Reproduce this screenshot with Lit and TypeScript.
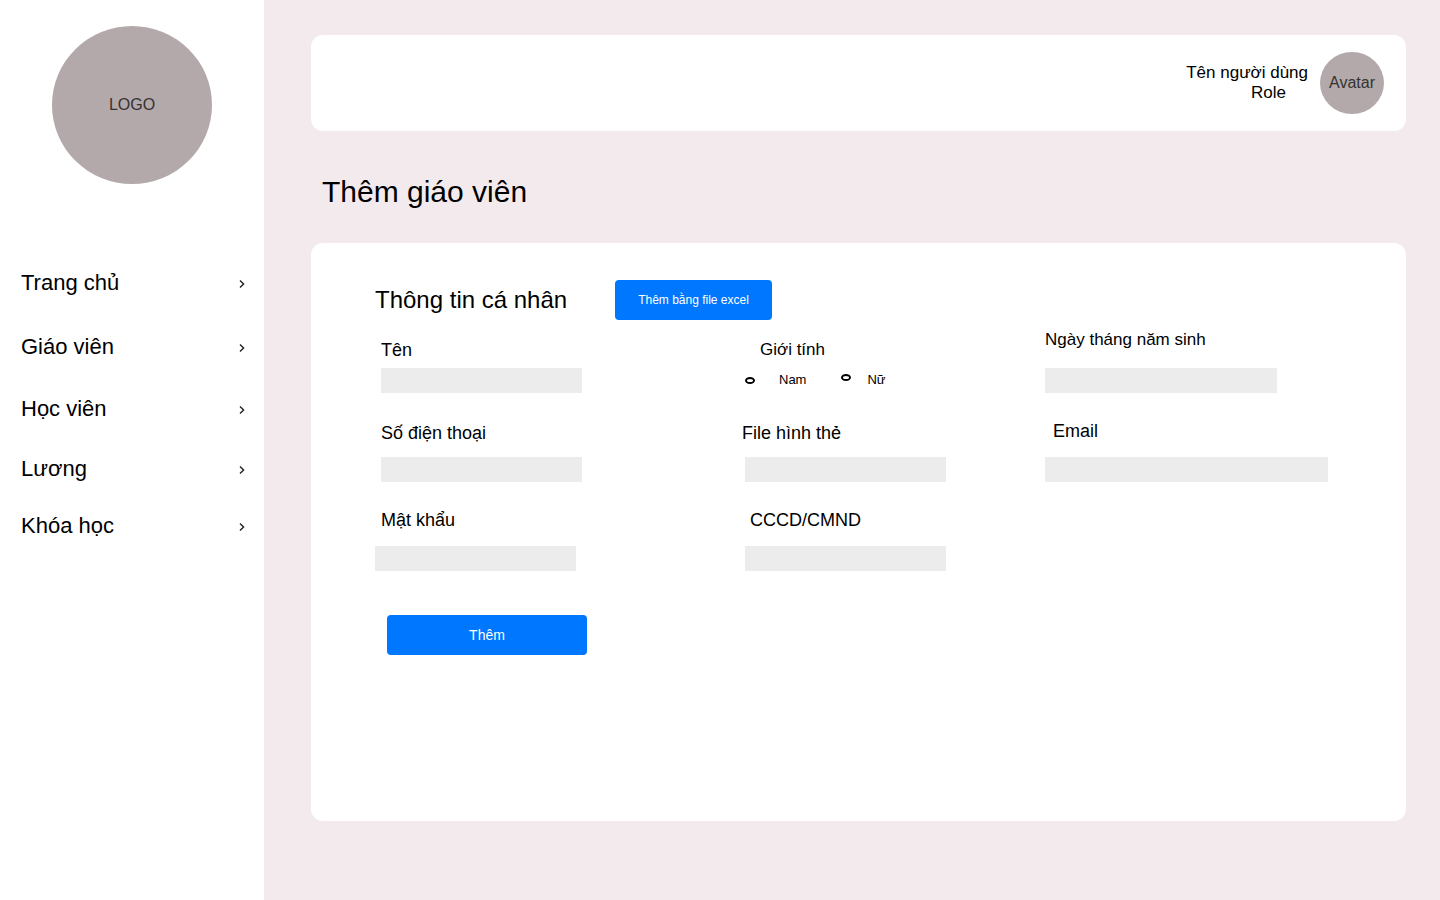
import { LitElement, html, css } from "lit";
import { customElement } from "lit/decorators.js";

const MENU = ["Trang chủ", "Giáo viên", "Học viên", "Lương", "Khóa học"];

@customElement("side-menu")
export class SideMenu extends LitElement {
  static styles = css`
    :host {
      display: block;
      background: #ffffff;
      padding-top: 26px;
      box-sizing: border-box;
    }
    .logo {
      width: 160px;
      height: 158px;
      margin: 0 auto 67px;
      border-radius: 50%;
      background: #b3a9aa;
      color: #333333;
      font-size: 16px;
      display: flex;
      align-items: center;
      justify-content: center;
    }
    .menu {
      display: grid;
      grid-template-rows: 64px 64px 60px 60px 54px;
    }
    .item {
      display: flex;
      align-items: center;
      justify-content: space-between;
      padding: 0 19px 0 21px;
      color: #000000;
      font-size: 22px;
      line-height: 26px;
      text-decoration: none;
    }
    .chevron {
      width: 6px;
      height: 12px;
      fill: none;
      stroke: #222222;
      stroke-width: 1.4;
    }
  `;

  render() {
    return html`
      <div class="logo">LOGO</div>
      <nav class="menu">
        ${MENU.map(
          (label) => html`
            <a class="item" href="#">
              <span>${label}</span>
              <svg class="chevron" viewBox="0 0 6 12" aria-hidden="true">
                <path d="M1 3.4 L4.6 7 L1 10.6" />
              </svg>
            </a>
          `
        )}
      </nav>
    `;
  }
}

@customElement("teacher-form")
export class TeacherForm extends LitElement {
  static styles = css`
    :host {
      display: block;
    }
    .head {
      display: flex;
      align-items: center;
      gap: 48px;
      margin-bottom: 10px;
    }
    h2 {
      margin: 0;
      font-size: 24px;
      line-height: 40px;
      font-weight: 400;
    }
    button {
      height: 40px;
      padding: 0 23px;
      border: 0;
      border-radius: 4px;
      background: #0077ff;
      color: #ffffff;
      font-family: inherit;
      font-size: 14px;
    }
    .import {
      font-size: 12px;
    }
    .submit {
      width: 200px;
      margin: 44px 0 0 12px;
    }
    .fields {
      display: grid;
      grid-template-columns: 367fr 303fr 297fr;
      row-gap: 28px;
      align-items: end;
    }
    .field {
      display: flex;
      flex-direction: column;
      align-items: flex-start;
      gap: 16px;
      min-width: 0;
    }
    .tight {
      gap: 8px;
    }
    .near {
      gap: 14px;
    }
    .far {
      gap: 18px;
    }
    .label {
      font-size: 18px;
      line-height: 20px;
    }
    .compact {
      font-size: 17px;
    }
    .in-3 {
      margin-left: 3px;
    }
    .in-6 {
      margin-left: 6px;
    }
    .in-8 {
      margin-left: 8px;
    }
    .in-18 {
      margin-left: 18px;
    }
    .box {
      box-sizing: border-box;
      width: 201px;
      max-width: 100%;
      height: 25px;
      padding: 0 6px;
      border: 0;
      border-radius: 0;
      background: #ececec;
      font-family: inherit;
      font-size: 14px;
    }
    .box-date {
      width: 232px;
    }
    .box-wide {
      width: 283px;
    }
    .options {
      display: flex;
      gap: 35px;
      height: 25px;
      padding-top: 6px;
      box-sizing: border-box;
      align-items: flex-start;
    }
    .option {
      display: flex;
      align-items: center;
      gap: 24px;
      font-size: 13px;
      line-height: 12px;
    }
    .option-top {
      align-items: flex-start;
      gap: 16px;
    }
    .radio {
      appearance: none;
      box-sizing: border-box;
      width: 10px;
      height: 7px;
      margin: 0;
      border: 2px solid #000000;
      border-radius: 50%;
      background: #ffffff;
    }
    .radio:checked {
      background: #0077ff;
    }
  `;

  render() {
    return html`
      <form>
        <div class="head">
          <h2>Thông tin cá nhân</h2>
          <button type="button" class="import">Thêm bằng file excel</button>
        </div>
        <div class="fields">
          <div class="field tight">
            <label class="label in-6" for="name">Tên</label>
            <input class="box in-6" id="name" type="text" />
          </div>
          <div class="field tight" role="radiogroup" aria-labelledby="gender">
            <span class="label compact in-18" id="gender">Giới tính</span>
            <div class="options in-3">
              <label class="option">
                <input class="radio" type="radio" name="gender" value="nam" />Nam
              </label>
              <label class="option option-top">
                <input class="radio" type="radio" name="gender" value="nu" />Nữ
              </label>
            </div>
          </div>
          <div class="field far">
            <label class="label compact" for="birth">Ngày tháng năm sinh</label>
            <input class="box box-date" id="birth" type="text" />
          </div>

          <div class="field near">
            <label class="label in-6" for="phone">Số điện thoại</label>
            <input class="box in-6" id="phone" type="tel" />
          </div>
          <div class="field near">
            <label class="label" for="photo">File hình thẻ</label>
            <input class="box in-3" id="photo" type="text" />
          </div>
          <div class="field">
            <label class="label in-8" for="email">Email</label>
            <input class="box box-wide" id="email" type="email" />
          </div>

          <div class="field">
            <label class="label in-6" for="password">Mật khẩu</label>
            <input class="box" id="password" type="password" />
          </div>
          <div class="field">
            <label class="label in-8" for="citizen">CCCD/CMND</label>
            <input class="box in-3" id="citizen" type="text" />
          </div>
        </div>
        <button type="submit" class="submit">Thêm</button>
      </form>
    `;
  }
}

@customElement("app-root")
export class AppRoot extends LitElement {
  static styles = css`
    :host {
      display: grid;
      grid-template-columns: 264px minmax(0, 1fr);
      min-height: 100vh;
      background: #f3eaed;
      color: #000000;
      font-family: "Liberation Sans", Arial, sans-serif;
    }
    main {
      display: flex;
      flex-direction: column;
      box-sizing: border-box;
      padding: 35px 34px 79px 47px;
    }
    .card {
      background: #ffffff;
      border-radius: 12px;
    }
    .top {
      display: flex;
      align-items: center;
      justify-content: flex-end;
      gap: 12px;
      padding: 17px 22px;
    }
    .user {
      display: flex;
      flex-direction: column;
      align-items: flex-end;
      font-size: 17px;
      line-height: 20px;
    }
    .role {
      padding-right: 22px;
    }
    .avatar {
      width: 64px;
      height: 62px;
      border-radius: 50%;
      background: #b3a9aa;
      color: #333333;
      font-size: 16px;
      display: flex;
      align-items: center;
      justify-content: center;
    }
    h1 {
      margin: 41px 0 31px 11px;
      font-size: 30px;
      line-height: 40px;
      font-weight: 400;
    }
    .panel {
      flex: 1;
      padding: 37px 64px;
    }
  `;

  render() {
    return html`
      <side-menu></side-menu>
      <main>
        <header class="card top">
          <div class="user">
            <span>Tên người dùng</span>
            <span class="role">Role</span>
          </div>
          <div class="avatar">Avatar</div>
        </header>
        <h1>Thêm giáo viên</h1>
        <section class="card panel">
          <teacher-form></teacher-form>
        </section>
      </main>
    `;
  }
}
